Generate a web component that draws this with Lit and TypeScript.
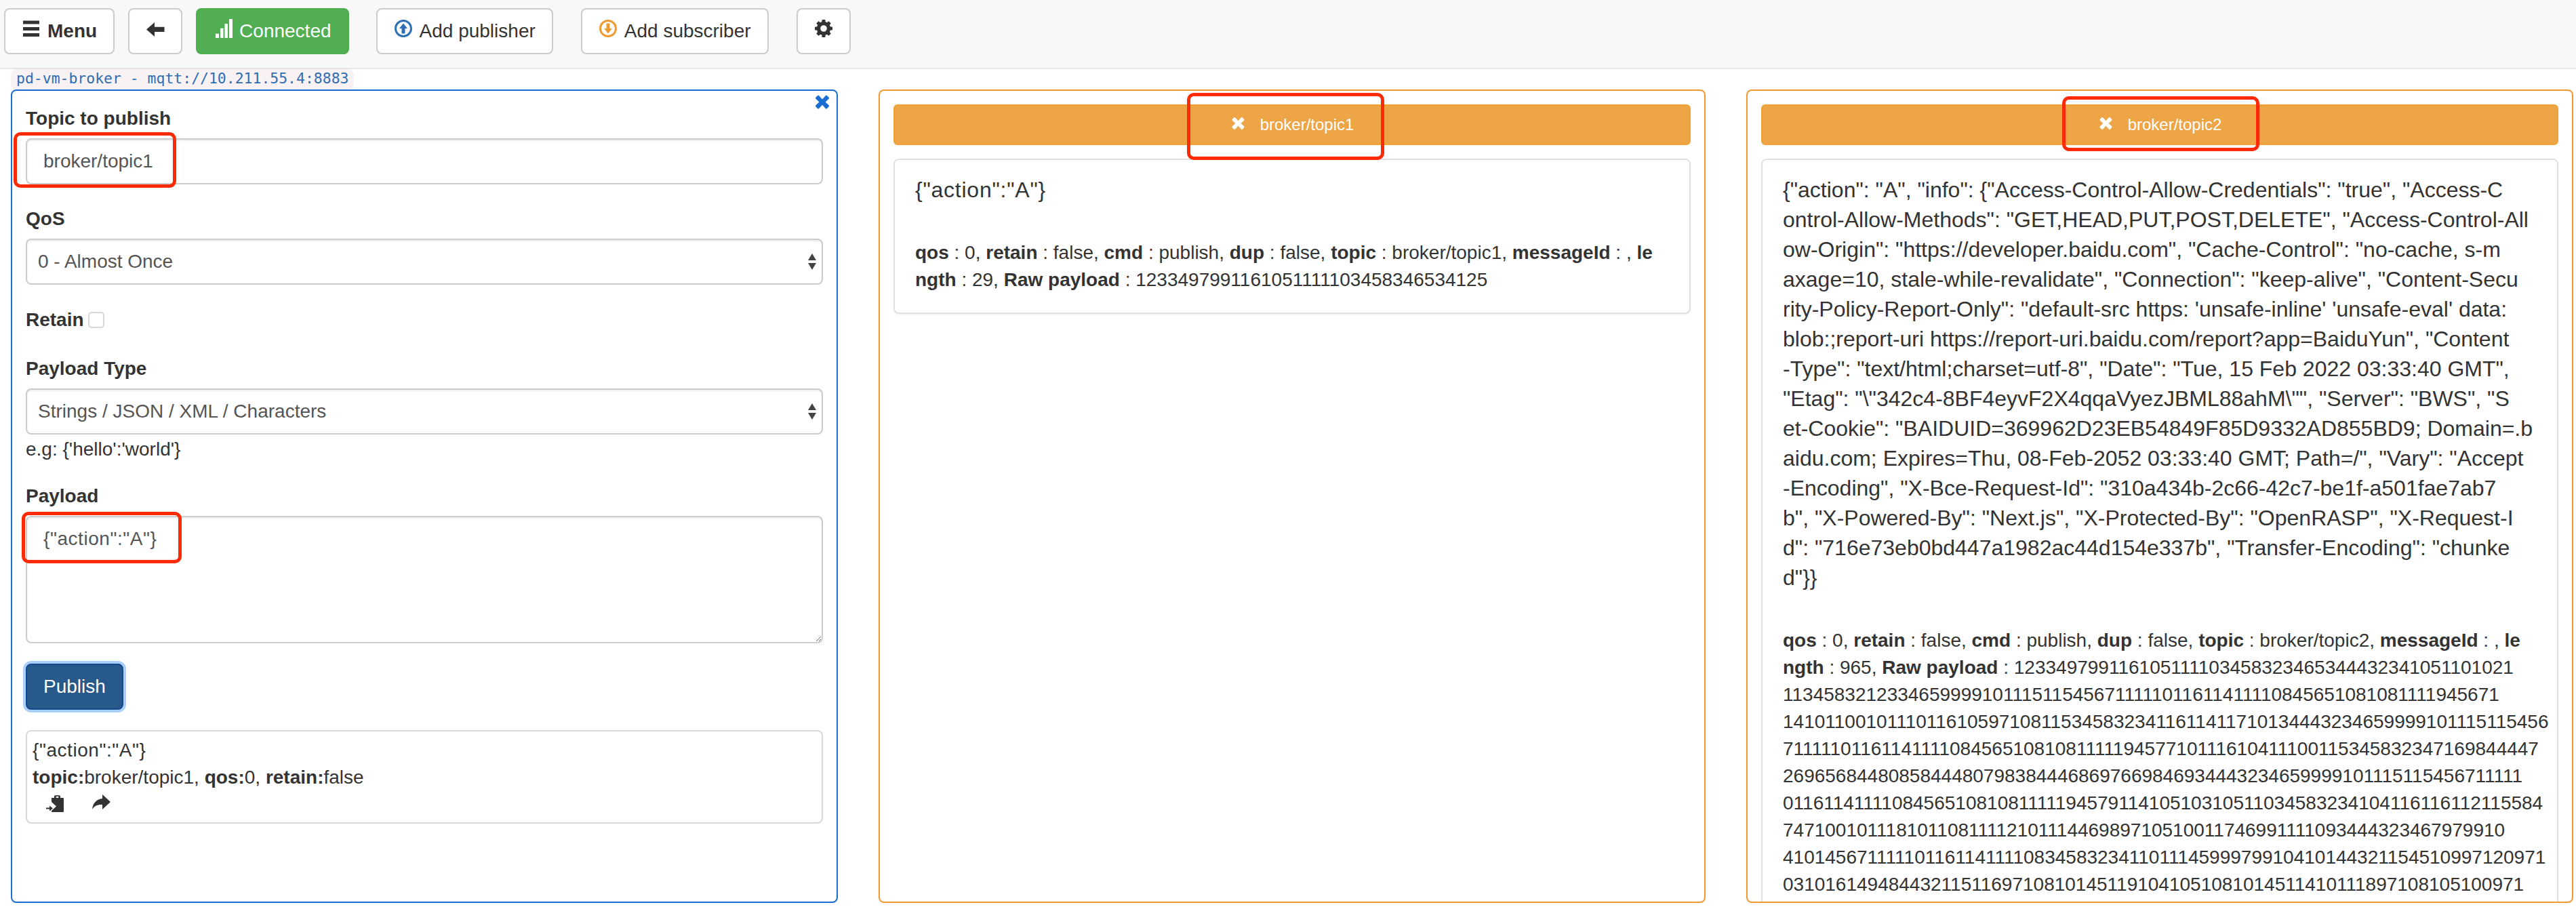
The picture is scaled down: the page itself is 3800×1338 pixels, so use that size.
import { LitElement, html, svg, css } from "lit";
import { customElement } from "lit/decorators.js";

const closeIcon = (cls: string) => html`<svg class=${cls} viewBox="0 0 24 24" aria-hidden="true"><path fill="currentColor" d="M6.5 1.5 L12 7.5 L17.5 1.5 Q18.5 .6 19.5 1.5 L22.5 4.7 Q23.4 5.7 22.5 6.7 L17 12 L22.5 17.3 Q23.4 18.3 22.5 19.3 L19.5 22.5 Q18.5 23.4 17.5 22.5 L12 16.5 L6.5 22.5 Q5.5 23.4 4.5 22.5 L1.5 19.3 Q.6 18.3 1.5 17.3 L7 12 L1.5 6.7 Q.6 5.7 1.5 4.7 L4.5 1.5 Q5.5 .6 6.5 1.5 Z"/></svg>`;

const menuIcon = html`<svg class="ico" viewBox="0 0 28 28"><path fill="currentColor" d="M2 .5h24v5H2zM2 10h24v5H2zM2 19h24v5H2z"/></svg>`;
const backIcon = html`<svg class="ico" viewBox="0 0 28 28"><path fill="currentColor" d="M1 13.5 L13 3 V9.7 H27.5 V17 H13 V24 Z"/></svg>`;
const signalIcon = html`<svg class="ico" viewBox="0 0 28 28"><path fill="currentColor" d="M3 19.7h5V26H3zM10 11.7h4.5V26H10zM16.5 5H21v21h-4.5zM23 -2h5v28h-5z"/></svg>`;
const upIcon = html`<svg class="ico" viewBox="0 0 28 28"><circle cx="14" cy="12" r="11.5" fill="none" stroke="#2f70b5" stroke-width="3"/><path fill="#2f70b5" d="M14 4.5 L20 12 H16.5 V19.5 H11.5 V12 H8 Z"/></svg>`;
const downIcon = html`<svg class="ico" viewBox="0 0 28 28"><circle cx="14" cy="12" r="11.5" fill="none" stroke="#ee9b32" stroke-width="3"/><path fill="#ee9b32" d="M14 19.5 L20 12 H16.5 V4.5 H11.5 V12 H8 Z"/></svg>`;
const gearIcon = html`<svg class="ico" viewBox="0 0 28 28"><circle cx="14" cy="12" r="7.5" fill="none" stroke="currentColor" stroke-width="5.4"/>${[0, 45, 90, 135, 180, 225, 270, 315].map(
  (a) => svg`<rect x="11.4" y="-1" width="5.2" height="6" rx="1" fill="currentColor" transform="rotate(${a} 14 12)"/>`
)}</svg>`;
const clipIcon = html`<svg class="clip" viewBox="0 0 26 25"><path fill="currentColor" fill-rule="evenodd" d="M8 4 H12 V1.5 Q12 0 16.5 0 Q21 0 21 1.5 V4 H25 Q26 4 26 5 V24 Q26 25 25 25 H9 Q8 25 8 24 V23 L15 16.5 L8 10 Z M14.8 1.8 V4 H18.2 V1.8 Z"/><path fill="currentColor" d="M0 18.5 H5 V15.5 L10 19.5 L5 23.5 V20.5 H0 Z"/></svg>`;
const shareIcon = html`<svg class="share" viewBox="0 0 27 22"><path fill="currentColor" d="M15 0 L27 11 L15 22 V15 C8 14.5 3 17 0 22 C1 12 7 7 15 6 Z"/></svg>`;

const payload2 = [
  `{"action": "A", "info": {"Access-Control-Allow-Credentials": "true", "Access-C`,
  `ontrol-Allow-Methods": "GET,HEAD,PUT,POST,DELETE", "Access-Control-All`,
  `ow-Origin": "https://developer.baidu.com", "Cache-Control": "no-cache, s-m`,
  `axage=10, stale-while-revalidate", "Connection": "keep-alive", "Content-Secu`,
  `rity-Policy-Report-Only": "default-src https: 'unsafe-inline' 'unsafe-eval' data:`,
  `blob:;report-uri https://report-uri.baidu.com/report?app=BaiduYun", "Content`,
  `-Type": "text/html;charset=utf-8", "Date": "Tue, 15 Feb 2022 03:33:40 GMT",`,
  `"Etag": "\\"342c4-8BF4eyvF2X4qqaVyezJBML88ahM\\"", "Server": "BWS", "S`,
  `et-Cookie": "BAIDUID=369962D23EB54849F85D9332AD855BD9; Domain=.b`,
  `aidu.com; Expires=Thu, 08-Feb-2052 03:33:40 GMT; Path=/", "Vary": "Accept`,
  `-Encoding", "X-Bce-Request-Id": "310a434b-2c66-42c7-be1f-a501fae7ab7`,
  `b", "X-Powered-By": "Next.js", "X-Protected-By": "OpenRASP", "X-Request-I`,
  `d": "716e73eb0bd447a1982ac44d154e337b", "Transfer-Encoding": "chunke`,
  `d"}}`,
];

const digits2 = [
  "1134583212334659999101115115456711111011611411110845651081081111945671",
  "14101100101110116105971081153458323411611411710134443234659999101115115456",
  "71111101161141111084565108108111119457710111610411100115345832347169844447",
  "26965684480858444807983844468697669846934443234659999101115115456711111",
  "01161141111084565108108111119457911410510310511034583234104116116112115584",
  "7471001011181011081111210111446989710510011746991111093444323467979910",
  "41014567111110116114111108345832341101114599979910410144321154510997120971",
  "03101614948443211511697108101451191041051081014511410111897108105100971",
];

const meta = (topic: string, line2: unknown) => html`
  <div class="meta">
    <div class="ln"><b>qos</b> : 0, <b>retain</b> : false, <b>cmd</b> : publish, <b>dup</b> : false, <b>topic</b> : ${topic}, <b>messageId</b> : , <b>le</b></div>
    <div class="ln">${line2}</div>
  </div>`;

const marks = [
  { l: 20, t: 195, w: 240, h: 82 },
  { l: 32, t: 755, w: 236, h: 76 },
  { l: 1751, t: 137, w: 291, h: 99 },
  { l: 3042, t: 142, w: 291, h: 81 },
];

@customElement("app-root")
export class AppRoot extends LitElement {
  static styles = css`
    :host {
      display: block;
      position: relative;
      width: 3800px;
      height: 1338px;
      overflow: hidden;
      background: #fff;
      font: 28px/40px "Liberation Sans", Arial, sans-serif;
      color: #333;
    }
    * { box-sizing: border-box; }
    .nav {
      height: 102px;
      background: #f8f8f8;
      border-bottom: 2px solid #e7e7e7;
      display: flex;
      align-items: flex-start;
      gap: 20px;
      padding: 12px 0 0 6px;
    }
    .btn {
      display: inline-flex;
      align-items: center;
      gap: 10px;
      height: 68px;
      padding: 0 24px;
      border: 2px solid #ccc;
      border-radius: 8px;
      background: #fff;
      color: #333;
      font: inherit;
    }
    .btn.far { margin-left: 20px; }
    .btn.far + .btn.far { margin-left: 21px; }
    .btn.ok { background: #52ae53; border-color: #4cae4c; color: #fff; }
    .btn b { font-weight: 700; }
    .ico { width: 28px; height: 28px; flex: none; overflow: visible; position: relative; top: -2px; }
    .conn {
      display: block;
      width: fit-content;
      height: 30px;
      margin: 0 0 0 16px;
      padding: 0 8px;
      border-radius: 8px;
      background: #f9f2f4;
      color: #2f6db3;
      font: 21.45px/28px "DejaVu Sans Mono", monospace;
      white-space: pre;
    }
    .cols {
      display: grid;
      grid-template-columns: repeat(3, 1220px);
      gap: 60px;
      padding-left: 16px;
    }
    .panel {
      position: relative;
      height: 1200px;
      overflow: hidden;
      border: 2px solid #ef9a2e;
      border-radius: 8px;
      padding: 20px;
    }
    .panel.pub { border-color: #1a6dd2; }
    .x-pub { position: absolute; top: 5px; right: 10px; width: 22px; height: 23px; color: #1a6dd2; }
    label { display: block; font-weight: 700; padding-top: 1px; height: 50px; }
    .group { margin-bottom: 30px; }
    .field {
      display: block;
      width: 100%;
      height: 68px;
      padding: 12px 24px;
      border: 2px solid #ccc;
      border-radius: 8px;
      background: #fff;
      color: #555;
      font: inherit;
      box-shadow: inset 0 2px 2px rgba(0, 0, 0, 0.075);
      outline: none;
    }
    textarea.field { height: 188px; letter-spacing: 0.55px; }
    .sel { position: relative; }
    select.field { appearance: none; padding: 12px 16px; }
    .updown { position: absolute; right: 10px; top: 22px; width: 12px; height: 24px; color: #444; }
    .retain { display: flex; align-items: center; gap: 6px; height: 42px; padding-top: 2px; margin-bottom: 31px; }
    .retain span { font-weight: 700; }
    .retain input { appearance: none; width: 24px; height: 24px; margin: 0; border: 2px solid #d8d8d8; border-radius: 5px; background: #fff; }
    .eg { margin: 2px 0 28px; }
    .publish {
      display: block;
      height: 68px;
      padding: 0 24px;
      border: 2px solid #16468c;
      border-radius: 8px;
      background: #27598a;
      color: #fff;
      font: inherit;
      box-shadow: 0 0 0 4px #a9cffb;
      margin-bottom: 30px;
    }
    .sent {
      height: 138px;
      padding: 8px;
      border: 2px solid #d9d9d9;
      border-radius: 8px;
    }
    .sent .q { letter-spacing: 0.55px; }
    .tools { display: flex; align-items: flex-start; gap: 42px; padding: 5px 0 0 20px; }
    .clip { width: 26px; height: 25px; margin-top: 1px; }
    .share { width: 27px; height: 22px; }
    .bar {
      display: flex;
      align-items: center;
      justify-content: center;
      gap: 21px;
      height: 60px;
      border: 2px solid #eea236;
      border-radius: 6px;
      background: #eea546;
      color: #fff;
      font-size: 24px;
      line-height: 36px;
      margin-bottom: 20px;
    }
    .x-bar { width: 23px; height: 20px; position: relative; top: -2px; }
    .card {
      padding: 22px 30px 28px;
      border: 2px solid #dfdfe6;
      border-radius: 8px;
      box-shadow: 0 2px 2px rgba(0, 0, 0, 0.05);
    }
    .body { font-size: 32px; line-height: 44px; margin-bottom: 51px; }
    .body.q { letter-spacing: 0.75px; }
    .ln { white-space: nowrap; }
    .mark {
      position: absolute;
      border: 5px solid #fd2a06;
      border-radius: 10px;
      pointer-events: none;
    }
  `;

  render() {
    return html`
      <div class="nav">
        <button class="btn">${menuIcon}<b>Menu</b></button>
        <button class="btn">${backIcon}</button>
        <button class="btn ok">${signalIcon}Connected</button>
        <button class="btn far">${upIcon}Add publisher</button>
        <button class="btn far">${downIcon}Add subscriber</button>
        <button class="btn far">${gearIcon}</button>
      </div>
      <code class="conn">pd-vm-broker - mqtt://10.211.55.4:8883</code>
      <div class="cols">
        <section class="panel pub">
          ${closeIcon("x-pub")}
          <div class="group">
            <label for="topic">Topic to publish</label>
            <input id="topic" class="field" value="broker/topic1" />
          </div>
          <div class="group">
            <label for="qos">QoS</label>
            <div class="sel">
              <select id="qos" class="field"><option>0 - Almost Once</option></select>
              <svg class="updown" viewBox="0 0 12 24"><path fill="currentColor" d="M6 0 L12 10 H0 Z M0 14 H12 L6 24 Z"/></svg>
            </div>
          </div>
          <div class="retain"><span>Retain</span><input type="checkbox" /></div>
          <label for="ptype">Payload Type</label>
          <div class="sel">
            <select id="ptype" class="field"><option>Strings / JSON / XML / Characters</option></select>
            <svg class="updown" viewBox="0 0 12 24"><path fill="currentColor" d="M6 0 L12 10 H0 Z M0 14 H12 L6 24 Z"/></svg>
          </div>
          <div class="eg">e.g: {'hello':'world'}</div>
          <div class="group">
            <label for="payload">Payload</label>
            <textarea id="payload" class="field" rows="4">{"action":"A"}</textarea>
          </div>
          <button class="publish">Publish</button>
          <div class="sent">
            <div class="q">{"action":"A"}</div>
            <div><b>topic:</b>broker/topic1, <b>qos:</b>0, <b>retain:</b>false</div>
            <div class="tools">${clipIcon}${shareIcon}</div>
          </div>
        </section>

        <section class="panel">
          <div class="bar">${closeIcon("x-bar")}<span>broker/topic1</span></div>
          <div class="card">
            <div class="body q">{"action":"A"}</div>
            ${meta("broker/topic1", html`<b>ngth</b> : 29, <b>Raw payload</b> : 1233497991161051111103458346534125`)}
          </div>
        </section>

        <section class="panel">
          <div class="bar">${closeIcon("x-bar")}<span>broker/topic2</span></div>
          <div class="card">
            <div class="body">${payload2.map((l) => html`<div class="ln">${l}</div>`)}</div>
            ${meta("broker/topic2", html`<b>ngth</b> : 965, <b>Raw payload</b> : 123349799116105111103458323465344432341051101021`)}
            ${digits2.map((l) => html`<div class="ln">${l}</div>`)}
          </div>
        </section>
      </div>
      ${marks.map(
        (m) => html`<div class="mark" style="left:${m.l}px;top:${m.t}px;width:${m.w}px;height:${m.h}px"></div>`
      )}
    `;
  }
}
